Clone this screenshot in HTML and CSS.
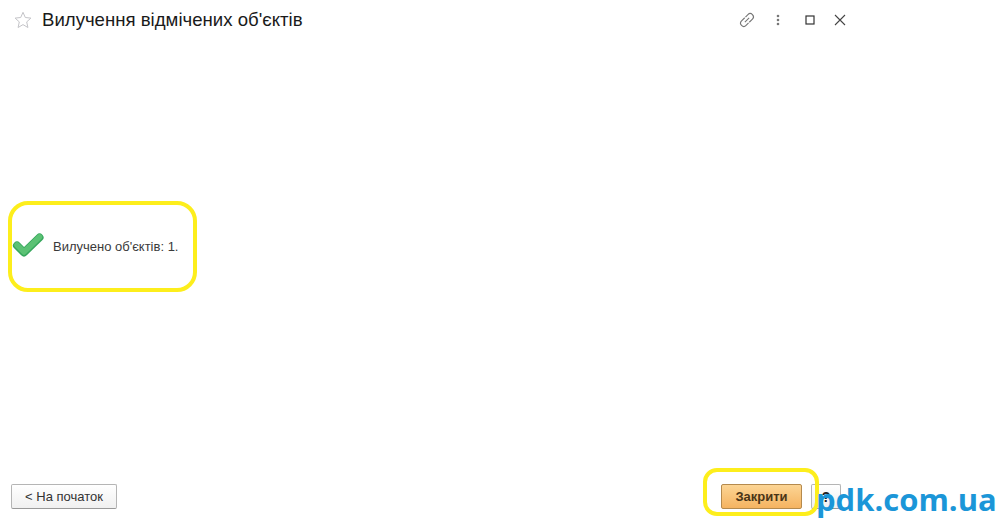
FILE: index.html
```html
<!DOCTYPE html>
<html lang="en">
<head>
  <meta charset="UTF-8" />
  <title>Вилучення відмічених об'єктів</title>
  <link rel="stylesheet" href="styles.css">
</head>
<body>
  <div class="window">
    <header class="title-bar">
      <svg class="star" width="18" height="18" viewBox="0 0 18 18">
        <path d="M9 1.300l2.300 5.200 5.600.6-4.200 3.800 1.200 5.600L9 13.600l-4.900 2.900 1.200-5.600-4.200-3.800 5.600-.6z" fill="none" stroke="#c4c4c8" stroke-width="1"/>
      </svg>
      <h1>Вилучення відмічених об'єктів</h1>
      <div class="win-icons">
        <svg width="18" height="18" viewBox="0 0 18 18" fill="none" stroke="#767676" stroke-width="1.100">
          <g transform="rotate(-45 9 9)">
            <path d="M9 5.800H4.500a3.200 3.200 0 0 0 0 6.400H8"/>
            <path d="M9 12.200h4.500a3.200 3.200 0 0 0 0-6.400H10"/>
            <path d="M6 9h6"/>
          </g>
        </svg>
        <svg width="6" height="18" viewBox="0 0 6 18" fill="#777">
          <circle cx="3" cy="5" r="1.300"/>
          <circle cx="3" cy="9" r="1.300"/>
          <circle cx="3" cy="13" r="1.300"/>
        </svg>
        <svg class="icon-max" width="10" height="18" viewBox="0 0 10 18" fill="none" stroke="#333" stroke-width="1.200">
          <rect x="1" y="5" width="8" height="8"/>
        </svg>
        <svg width="12" height="18" viewBox="0 0 12 18" fill="none" stroke="#444" stroke-width="1.100">
          <path d="M1 4l10 10M11 4L1 14"/>
        </svg>
      </div>
    </header>

    <main class="content">
      <div class="message">
        <svg class="check" width="32" height="26" viewBox="0 0 32 26">
          <path d="M5 12.500l7 7L27.500 4.500" fill="none" stroke="#37a75d" stroke-width="8" stroke-linecap="round" stroke-linejoin="round"/>
          <path d="M5 12l7 7L27.500 4" fill="none" stroke="#5bc274" stroke-width="5.500" stroke-linecap="round" stroke-linejoin="round"/>
        </svg>
        <span>Вилучено об'єктів: 1.</span>
      </div>
    </main>

    <footer class="buttons">
      <button class="btn">&lt; На початок</button>
      <div class="buttons-right">
        <button class="btn btn-primary">Закрити</button>
        <button class="btn btn-help">?</button>
      </div>
    </footer>
  </div>

  <div class="mark mark-message"></div>
  <div class="mark mark-close"></div>
  <div class="watermark">pdk.com.ua</div>
</body>
</html>
```

FILE: styles.css
```css
html, body {
  margin: 0;
  height: 100%;
  overflow: hidden;
}

body {
  background: #fff;
  font-family: 'Liberation Sans', Arial, sans-serif;
  color: #333;
  position: relative;
}

.window {
  width: 850px;
  height: 518px;
  display: flex;
  flex-direction: column;
}

.title-bar {
  height: 40px;
  display: flex;
  align-items: center;
  padding-left: 14px;
  box-sizing: border-box;
}

.star {
  margin-right: 10px;
}

.title-bar h1 {
  margin: 0;
  font-size: 18.6px;
  font-weight: normal;
  color: #1a1a1a;
  flex: 1;
}

.win-icons {
  display: flex;
  align-items: center;
  gap: 19px;
  padding-right: 4px;
}

.icon-max {
  margin-left: 5px;
}

.content {
  flex: 1;
  display: flex;
  align-items: center;
}

.message {
  display: flex;
  align-items: center;
  padding-left: 12px;
  font-size: 13px;
  color: #3a3a3a;
}

.check {
  margin-right: 9px;
}

.buttons {
  display: flex;
  justify-content: space-between;
  padding: 32px 9px 9px 11px;
}

.buttons-right {
  display: flex;
  gap: 9px;
}

.btn {
  height: 25px;
  width: 106px;
  padding: 0;
  font-family: inherit;
  font-size: 13px;
  color: #333;
  background: linear-gradient(#fff, #f0f0f0);
  border: 1px solid #b5b5b5;
  border-bottom-color: #999;
  border-radius: 2px;
}

.btn-primary {
  width: 81px;
  font-weight: bold;
  color: #4a3517;
  background: linear-gradient(#fcd594, #f5b361);
  border-color: #b58a4d;
}

.btn-help {
  width: 30px;
  font-weight: bold;
  font-size: 14px;
  color: #222;
}

/* yellow marks and the site name are drawn over the screenshot */
.mark {
  position: absolute;
  box-sizing: border-box;
  border: 4px solid #fdee1c;
  border-radius: 20px;
}

.mark-message {
  left: 8px;
  top: 201px;
  width: 189px;
  height: 91px;
}

.mark-close {
  left: 703px;
  top: 468px;
  width: 116px;
  height: 48px;
  border-radius: 14px;
}

.watermark {
  position: absolute;
  left: 816px;
  top: 481px;
  font-family: 'Open Sans', sans-serif;
  font-size: 31px;
  font-weight: bold;
  line-height: 37px;
  color: #1b96d8;
  white-space: nowrap;
}
```
